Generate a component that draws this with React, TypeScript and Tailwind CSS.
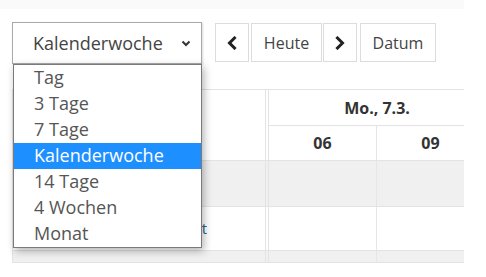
import React from "react";

const OPTIONS = ["Tag", "3 Tage", "7 Tage", "Kalenderwoche", "14 Tage", "4 Wochen", "Monat"];

function Chevron({ dir }: { dir: "left" | "right" }) {
  return (
    <svg width="10" height="14" viewBox="0 0 10 14" fill="none">
      <path
        d={dir === "left" ? "M7.5 2 L2.5 7 L7.5 12" : "M2.5 2 L7.5 7 L2.5 12"}
        stroke="#222"
        strokeWidth="3"
        strokeLinecap="square"
      />
    </svg>
  );
}

function Row({ bg, h, left }: { bg: string; h: string; left?: React.ReactNode }) {
  return (
    <div className={`flex ${bg} ${h} border-b border-[#e3e3e3]`}>
      <div className="w-[253px] shrink-0 border-r border-[#e3e3e3] flex items-center">{left}</div>
      <div className="w-[2px] shrink-0" />
      <div className="flex border-l border-[#e3e3e3]">
        <div className="w-[108px] shrink-0 border-r border-[#e6e6e6]" />
        <div className="w-[108px] shrink-0 border-r border-[#e6e6e6]" />
      </div>
    </div>
  );
}

export default function App() {
  return (
    <div className="relative w-[486px] h-[277px] overflow-hidden bg-white font-['Open_Sans',sans-serif]">
      <div className="h-[9px] w-[464px] bg-[#fafafa]" />

      {/* toolbar */}
      <div className="flex items-start mt-[13px] pl-[12px]">
        <div className="w-[190px] h-[42px] border border-[#a9a9a9] shadow-[1px_1px_2px_rgba(0,0,0,0.15)] bg-white flex items-center pl-[20px] pr-[10px] text-[18px] text-[#444]">
          <span className="flex-1">Kalenderwoche</span>
          <svg width="10" height="7" viewBox="0 0 10 7" fill="none">
            <path d="M1.5 1.5 L5 5 L8.5 1.5" stroke="#333" strokeWidth="2" />
          </svg>
        </div>
        <div className="flex ml-[13px] mt-[1px] h-[39px] text-[16px] text-[#444]">
          <button className="w-[34px] h-full border border-[#dcdcdc] bg-white flex items-center justify-center">
            <Chevron dir="left" />
          </button>
          <button className="ml-[2px] w-[71px] h-full border border-[#dcdcdc] bg-white">Heute</button>
          <button className="ml-[1px] w-[34px] h-full border border-[#dcdcdc] bg-white flex items-center justify-center">
            <Chevron dir="right" />
          </button>
          <button className="ml-[3px] w-[76px] h-full border border-[#dcdcdc] bg-white">Datum</button>
        </div>
      </div>

      {/* table */}
      <div className="mt-[25px] ml-[12px] w-[452px] overflow-hidden border-t border-l border-[#e3e3e3]">
        <div className="flex h-[71px] border-b border-[#e3e3e3]">
          <div className="w-[253px] shrink-0 border-r border-[#e3e3e3]" />
          <div className="w-[2px] shrink-0" />
          <div className="flex flex-col border-l border-[#e3e3e3] text-[16px] font-bold text-[#333]">
            <div className="h-[36px] w-[230px] border-b border-[#e3e3e3] flex items-center justify-center pr-[14px]">
              Mo., 7.3.
            </div>
            <div className="flex flex-1">
              <div className="w-[108px] border-r border-[#e6e6e6] flex items-center justify-center">06</div>
              <div className="w-[108px] border-r border-[#e6e6e6] flex items-center justify-center">09</div>
            </div>
          </div>
        </div>
        <Row bg="bg-[#f0f0f0]" h="h-[46px]" />
        <Row
          bg="bg-white"
          h="h-[44px]"
          left={
            <div className="w-[194px] text-right text-[15px] text-[#2a6496] whitespace-nowrap overflow-hidden">
              Besprechungsraum Ost
            </div>
          }
        />
        <Row bg="bg-[#f0f0f0]" h="h-[12px]" />
      </div>

      {/* open dropdown */}
      <div className="absolute left-[13px] top-[64px] w-[189px] bg-white border border-[#7a7a7a] shadow-[2px_3px_8px_rgba(0,0,0,0.3)] text-[18px] text-[#555]">
        {OPTIONS.map((o) => (
          <div
            key={o}
            className={`h-[26px] leading-[24px] pl-[20px] ${o === "Kalenderwoche" ? "bg-[#1e8fff] text-white" : ""}`}
          >
            {o}
          </div>
        ))}
      </div>
    </div>
  );
}
